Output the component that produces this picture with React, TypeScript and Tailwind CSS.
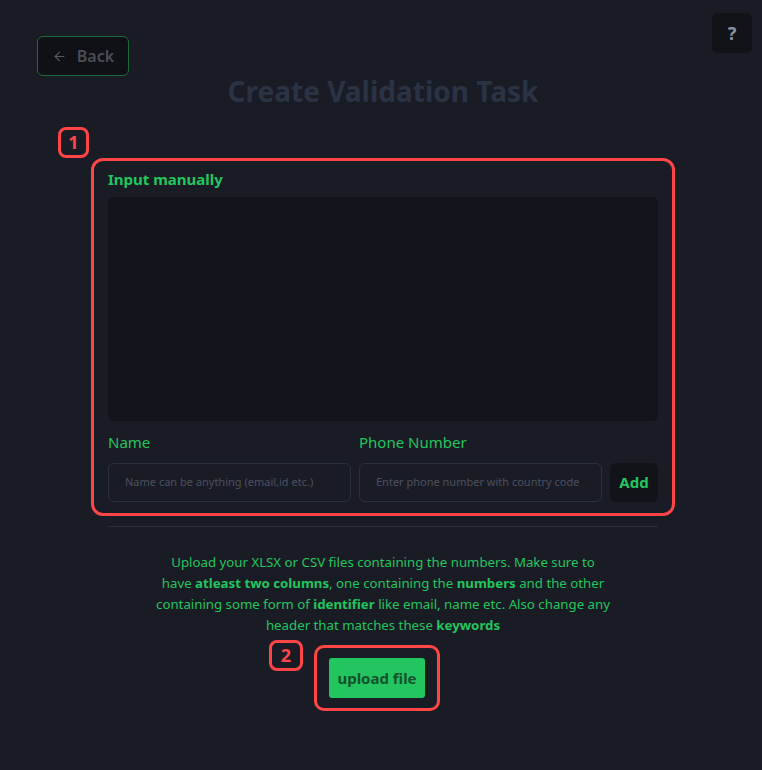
import { ArrowLeft } from "lucide-react";

const FONT = { fontFamily: '"Noto Sans", "Open Sans", sans-serif' };

const App = () => {
  return (
    <div
      className="relative min-h-[770px] w-full bg-[#1a1c25] text-[#22c55e]"
      style={FONT}
    >
      {/* help button */}
      <button className="absolute right-[10px] top-[13px] flex h-10 w-10 items-center justify-center rounded-[6px] bg-[#111318] text-[18px] font-bold text-[#8a93a6]">
        ?
      </button>

      <div className="pl-[37px] pt-[36px]">
        <button className="flex h-[40px] w-[92px] items-center justify-center gap-[10px] rounded-[6px] border border-[#1e6b3a] bg-[#0f1116] text-[16px] font-semibold text-[#4a4e57]">
          <ArrowLeft size={15} strokeWidth={1.8} className="text-[#555a63]" />
          Back
        </button>
      </div>

      <h1 className="-mt-[3px] pl-[4px] text-center text-[28px] font-bold leading-[36px] text-[#2a3344]">
        Create Validation Task
      </h1>

      <div className="relative mx-auto mt-[49px] w-[584px] translate-x-[2px]">
        {/* annotation 1 */}
        <div className="absolute -left-[33px] -top-[31px] flex h-[31px] w-[31px] items-center justify-center rounded-[8px] border-[3px] border-[#ff4545] text-[18px] font-bold text-[#ff4545]">
          1
        </div>

        <div className="rounded-[12px] border-[3px] border-[#ff4545] px-[14px] pb-[11px] pt-[8px]">
          <div className="text-[15px] font-bold leading-[20px]">Input manually</div>
          <div className="mt-[8px] h-[224px] rounded-[6px] bg-[#12141b]" />

          <div className="mt-[10px] flex items-end gap-[8px]">
            <div className="flex w-[243px] flex-col">
              <label className="text-[15px] leading-[22px]">Name</label>
              <div className="mt-[10px] flex h-[39px] items-center whitespace-nowrap rounded-[6px] border border-[#2c303c] px-[16px] text-[11px] text-[#4a5060]">
                Name can be anything (email,id etc.)
              </div>
            </div>
            <div className="flex w-[243px] flex-col">
              <label className="text-[15px] leading-[22px]">Phone Number</label>
              <div className="mt-[10px] flex h-[39px] items-center whitespace-nowrap rounded-[6px] border border-[#2c303c] px-[16px] text-[11px] text-[#4a5060]">
                Enter phone number with country code
              </div>
            </div>
            <button className="flex h-[39px] w-[48px] items-center justify-center rounded-[6px] bg-[#111318] text-[15px] font-bold">
              Add
            </button>
          </div>
        </div>
      </div>

      <div className="mx-auto mt-[10px] w-[550px] translate-x-[2px] border-t border-[#2a2d38]" />

      <p className="mx-auto mt-[25px] w-[455px] translate-x-[2px] text-center text-[13.25px] leading-[21px]">
        Upload your XLSX or CSV files containing the numbers. Make sure to have{" "}
        <b>atleast two columns</b>, one containing the <b>numbers</b> and the other containing
        some form of <b>identifier</b> like email, name etc. Also change any header that matches
        these <b>keywords</b>
      </p>

      <div className="mt-[9px] flex justify-center pr-[8px]">
        <div className="relative">
          {/* annotation 2 */}
          <div className="absolute -left-[45px] -top-[5px] flex h-[31px] w-[34px] items-center justify-center rounded-[8px] border-[3px] border-[#ff4545] text-[18px] font-bold text-[#ff4545]">
            2
          </div>
          <div className="rounded-[10px] border-[3px] border-[#ff4545] px-[12px] py-[10px]">
            <button className="flex h-[40px] w-[96px] items-center justify-center rounded-[3px] bg-[#22c55e] text-[15px] font-bold text-[#14532d]">
              upload file
            </button>
          </div>
        </div>
      </div>
    </div>
  );
};

export default App;
